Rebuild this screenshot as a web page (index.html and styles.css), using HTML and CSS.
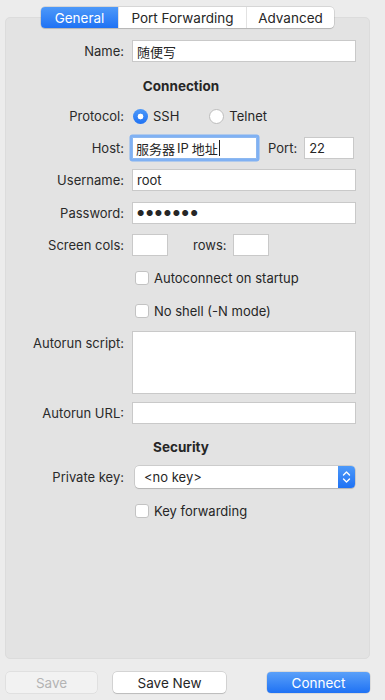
FILE: index.html
```html
<!DOCTYPE html>
<html lang="zh">
<head>
  <meta charset="UTF-8">
  <title>Connection</title>
  <link rel="stylesheet" href="styles.css">
</head>
<body>
<div class="window">
  <div class="panel">
    <div class="tabs">
      <div class="tab active">General</div>
      <div class="tab">Port Forwarding</div>
      <div class="tab">Advanced</div>
    </div>

    <div class="row row-name">
      <span class="lbl">Name:</span>
      <div class="field">随便写</div>
    </div>

    <div class="section sec-conn">Connection</div>

    <div class="row row-proto">
      <span class="lbl">Protocol:</span>
      <div class="radios">
        <span class="radio on"></span><span class="opt">SSH</span>
        <span class="radio off"></span><span class="opt">Telnet</span>
      </div>
    </div>

    <div class="row row-host">
      <span class="lbl">Host:</span>
      <div class="host-line">
        <div class="field host">服务器<span class="latin">IP</span>地址<span class="caret"></span></div>
        <span class="lbl port-lbl">Port:</span>
        <div class="field port">22</div>
      </div>
    </div>

    <div class="row row-user">
      <span class="lbl">Username:</span>
      <div class="field">root</div>
    </div>

    <div class="row row-pass">
      <span class="lbl">Password:</span>
      <div class="field dots">●●●●●●●</div>
    </div>

    <div class="row row-screen">
      <span class="lbl">Screen cols:</span>
      <div class="screen-line">
        <div class="field small"></div>
        <span class="lbl rows-lbl">rows:</span>
        <div class="field small"></div>
      </div>
    </div>

    <div class="row row-auto">
      <span></span>
      <div class="check-line"><span class="box"></span>Autoconnect on startup</div>
    </div>

    <div class="row row-noshell">
      <span></span>
      <div class="check-line"><span class="box"></span>No shell (-N mode)</div>
    </div>

    <div class="row row-script">
      <span class="lbl top">Autorun script:</span>
      <div class="field area"></div>
    </div>

    <div class="row row-url">
      <span class="lbl">Autorun URL:</span>
      <div class="field"></div>
    </div>

    <div class="section sec-security">Security</div>

    <div class="row row-key">
      <span class="lbl">Private key:</span>
      <div class="select">
        <span class="select-text">&lt;no key&gt;</span>
        <span class="select-arrows">
          <svg width="9" height="14" viewBox="0 0 9 14"><path d="M1.5 5 L4.5 2 L7.5 5 M1.5 9 L4.5 12 L7.5 9" fill="none" stroke="#fff" stroke-width="1.4" stroke-linecap="round" stroke-linejoin="round"/></svg>
        </span>
      </div>
    </div>

    <div class="row row-keyfwd">
      <span></span>
      <div class="check-line"><span class="box"></span>Key forwarding</div>
    </div>
  </div>

  <div class="actions">
    <button class="btn btn-save" disabled>Save</button>
    <button class="btn btn-new">Save New</button>
    <button class="btn btn-connect">Connect</button>
  </div>
</div>
</body>
</html>
```

FILE: styles.css
```css
body {
  margin: 0;
  background: #ececec;
  font-family: Inter, "Noto Sans CJK SC", sans-serif;
  font-size: 13px;
  color: #262626;
}

.window {
  width: 385px;
  height: 700px;
  padding-top: 17px;
  box-sizing: border-box;
}

.panel {
  margin-left: 5px;
  width: 365px;
  height: 642px;
  box-sizing: border-box;
  background: #e3e3e3;
  border-radius: 5px;
  border: 1px solid #dcdcdc;
  padding-right: 13px;
}

/* segmented tabs */
.tabs {
  display: flex;
  width: 293px;
  height: 21px;
  margin: -11px auto 0 35px;
  background: #fff;
  border-radius: 4px;
  box-shadow: 0 0 0 0.5px rgba(0, 0, 0, 0.18), 0 1px 1px rgba(0, 0, 0, 0.12);
  overflow: hidden;
}

.tab {
  display: flex;
  align-items: center;
  justify-content: center;
  border-left: 1px solid #e2e2e2;
  color: #262626;
  font-size: 13.5px;
}

.tab:nth-child(1) { width: 77px; border-left: none; }
.tab:nth-child(2) { width: 127px; }
.tab:nth-child(3) { flex: 1; }

.tab.active {
  background: linear-gradient(#4d99f9, #1f72f4);
  color: #fff;
}

/* form rows */
.row {
  display: grid;
  grid-template-columns: 118px 1fr;
  column-gap: 8px;
  align-items: center;
}

.lbl {
  text-align: right;
  color: #2a2a2a;
}

.lbl.top {
  align-self: start;
  padding-top: 4px;
}

.field {
  height: 22px;
  box-sizing: border-box;
  background: #fff;
  border: 1px solid #c9c9c9;
  padding: 0 4px;
  display: flex;
  align-items: center;
  white-space: nowrap;
}

.dots {
  font-size: 8px;
  letter-spacing: 1.6px;
}

.section {
  text-align: center;
  font-weight: 700;
  font-size: 13.5px;
  height: 18px;
  line-height: 18px;
}

.row-name { margin-top: 12px; }
.sec-conn { margin-top: 15px; }
.row-proto { margin-top: 13px; height: 16px; }
.row-host { margin-top: 13px; }
.row-user { margin-top: 10px; }
.row-pass { margin-top: 11px; }
.row-screen { margin-top: 10px; }
.row-auto { margin-top: 15px; }
.row-noshell { margin-top: 19px; }
.row-script { margin-top: 13px; }
.row-url { margin-top: 8px; }
.sec-security { margin-top: 14px; }
.row-key { margin-top: 10px; }
.row-keyfwd { margin-top: 16px; }

/* radios */
.radios {
  display: flex;
  align-items: center;
  padding-left: 1px;
}

.radio {
  width: 15px;
  height: 15px;
  box-sizing: border-box;
  border-radius: 50%;
  display: inline-block;
}

.radio.on {
  background: radial-gradient(circle, #fff 0 2.6px, transparent 3.2px), linear-gradient(#4d99f9, #1f72f4);
}

.radio.off {
  background: #fff;
  border: 1px solid #bdbdbd;
  margin-left: 30px;
}

.opt {
  margin-left: 5px;
}

/* host line */
.host-line {
  display: flex;
  align-items: center;
}

.field.host {
  width: 125px;
  border-color: #8db8f0;
  border-radius: 1px;
  box-shadow: 0 0 0 2.5px #80b1f3;
  padding-left: 3px;
}

.latin {
  margin: 0 3px 0 2px;
}

.caret {
  display: inline-block;
  width: 1px;
  height: 16px;
  background: #222;
  margin-left: 1px;
}

.port-lbl {
  margin-left: 11px;
}

.field.port {
  margin-left: 7px;
  width: 50px;
}

.screen-line {
  display: flex;
  align-items: center;
}

.field.small {
  width: 36px;
}

.rows-lbl {
  margin-left: 25px;
  margin-right: 7px;
}

/* checkboxes */
.check-line {
  display: flex;
  align-items: center;
  height: 14px;
  padding-left: 3px;
}

.box {
  width: 14px;
  height: 14px;
  box-sizing: border-box;
  background: #fff;
  border: 1px solid #c3c3c3;
  border-radius: 3px;
  margin-right: 5px;
}

.field.area {
  height: 63px;
}

/* select */
.select {
  display: flex;
  height: 22px;
  margin-left: 3px;
  margin-right: 1px;
  border-radius: 4px;
  background: #fff;
  box-shadow: 0 0 0 0.5px rgba(0, 0, 0, 0.2), 0 1px 1px rgba(0, 0, 0, 0.12);
  overflow: hidden;
}

.select-text {
  flex: 1;
  display: flex;
  align-items: center;
  padding-left: 9px;
}

.select-arrows {
  width: 17px;
  display: flex;
  align-items: center;
  justify-content: center;
  background: linear-gradient(#4d99f9, #1f72f4);
}

/* bottom buttons */
.actions {
  display: flex;
  margin-top: 13px;
  padding: 0 15px 0 6px;
}

.btn {
  height: 21px;
  border: none;
  border-radius: 4px;
  font-family: Inter, sans-serif;
  font-size: 13.5px;
  padding: 0;
}

.btn-save {
  width: 91px;
  background: #f2f2f2;
  color: #b4b4b4;
  box-shadow: 0 0 0 0.5px rgba(0, 0, 0, 0.1);
}

.btn-new {
  width: 113px;
  margin-left: 16px;
  background: #fff;
  color: #262626;
  box-shadow: 0 0 0 0.5px rgba(0, 0, 0, 0.2), 0 1px 1px rgba(0, 0, 0, 0.12);
}

.btn-connect {
  width: 103px;
  margin-left: auto;
  background: linear-gradient(#5aa0f9, #1f72f4);
  color: #fff;
  box-shadow: 0 0 0 0.5px rgba(0, 0, 0, 0.15);
}
```
